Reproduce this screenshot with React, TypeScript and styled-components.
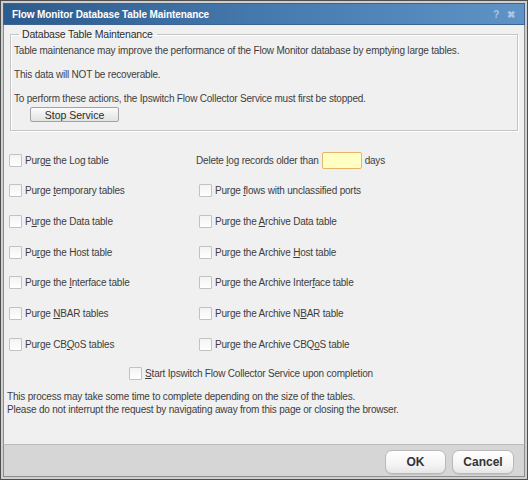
import React from 'react';
import styled, { createGlobalStyle } from 'styled-components';

const GlobalStyle = createGlobalStyle`
    html, body {
        margin: 0;
        padding: 0;
        background: #ffffff;
    }
    * {
        box-sizing: border-box;
    }
`;

const Window = styled.div`
    width: 528px;
    height: 480px;
    border: 1px solid #4f4f4f;
    background: #cfcfcf;
    padding: 2px;
    display: flex;
    flex-direction: column;
    font-family: "Liberation Sans", Arial, sans-serif;
    font-size: 10px;
    letter-spacing: -0.2px;
    color: #3e3e3e;
`;

const TitleBar = styled.div`
    height: 22px;
    flex-shrink: 0;
    display: flex;
    align-items: center;
    justify-content: space-between;
    padding: 0 9px 0 8px;
    background: linear-gradient(to right, #2c5b8d, #4b7fb3 60%, #5f93c6);
    border: 1px solid #3a6594;
`;

const Title = styled.span`
    color: #ffffff;
    font-weight: bold;
    font-size: 10px;
    letter-spacing: -0.1px;
`;

const TitleTools = styled.div`
    display: flex;
    gap: 8px;
    color: #a9c6e4;
    font-weight: bold;
    font-size: 10px;
`;

const Body = styled.div`
    flex: 1;
    background: #f0f0f0;
    border-left: 1px solid #8c8c8c;
    border-right: 1px solid #8c8c8c;
    padding: 3px 6px 0 2px;
    display: flex;
    flex-direction: column;
`;

const Group = styled.fieldset`
    margin: 0 0 0 4px;
    padding: 4px 4px 8px 3px;
    border: 1px solid #c4c4c4;
    box-shadow: inset 1px 1px 0 #ffffff, 1px 1px 0 #ffffff;
`;

const Legend = styled.legend`
    margin-left: 5px;
    padding: 0 4px 0 3px;
    color: #2e2e2e;
    font-size: 10.5px;
`;

const Note = styled.p`
    margin: 0;
    line-height: 13px;
`;

const Intro = styled.div`
    display: flex;
    flex-direction: column;
    gap: 11px;
`;

const StopButton = styled.button`
    margin: 2px 0 0 16px;
    width: 89px;
    height: 15px;
    padding: 0;
    font: inherit;
    font-size: 10.5px;
    color: #2a2a2a;
    border: 1px solid #a3a3a3;
    border-radius: 2px;
    background: linear-gradient(#fbfbfb, #e2e2e2);
    align-self: flex-start;
`;

const Options = styled.div`
    display: grid;
    grid-template-columns: 187px 1fr;
    grid-auto-rows: 30.67px;
    align-items: center;
    margin-top: 14px;
    padding-left: 3px;
`;

const Option = styled.label<{ $inset?: number }>`
    display: flex;
    align-items: center;
    gap: 3px;
    padding-left: ${(p) => p.$inset ?? 0}px;
`;

const Box = styled.span`
    width: 13px;
    height: 13px;
    flex-shrink: 0;
    border: 1px solid #c2c2c2;
    border-radius: 1px;
    background: linear-gradient(#f3f3f3, #ffffff);
`;

const DaysInput = styled.span`
    width: 40px;
    height: 17px;
    background: #ffffc4;
    border: 1px solid #e6b565;
    border-radius: 2px;
`;

const Completion = styled.div`
    display: flex;
    justify-content: center;
    margin: 0 0 0 -22px;
    height: 28px;
    align-items: center;
`;

const Footnote = styled.div`
    margin-top: 2px;
    padding-left: 1px;
    line-height: 13px;
`;

const Footer = styled.div`
    height: 33px;
    flex-shrink: 0;
    display: flex;
    justify-content: flex-end;
    align-items: center;
    gap: 6px;
    padding: 3px 10px 0 0;
    background: #d6d6d6;
    border: 1px solid #8c8c8c;
    border-top-color: #bcbcbc;
`;

const DialogButton = styled.button<{ $w: number }>`
    width: ${(p) => p.$w}px;
    height: 24px;
    padding: 0;
    font-family: "Liberation Sans", Arial, sans-serif;
    font-size: 12px;
    font-weight: bold;
    color: #333333;
    border: 1px solid #b9b9b9;
    border-radius: 7px;
    background: linear-gradient(#ffffff, #f4f4f4 60%, #e6e6e6);
    box-shadow: 0 1px 0 #c4c4c4;
`;

// access key letter, underlined like a Windows mnemonic
const U = styled.span`
    text-decoration: underline;
`;

function Check({ children, inset }: { children: React.ReactNode; inset?: number }) {
    return (
        <Option $inset={inset}>
            <Box />
            <span>{children}</span>
        </Option>
    );
}

function App() {
    return (
        <>
            <GlobalStyle />
            <Window>
                <TitleBar>
                    <Title>Flow Monitor Database Table Maintenance</Title>
                    <TitleTools>
                        <span>?</span>
                        <span>✖</span>
                    </TitleTools>
                </TitleBar>
                <Body>
                    <Group>
                        <Legend>Database Table Maintenance</Legend>
                        <Intro>
                            <Note>Table maintenance may improve the performance of the Flow Monitor database by emptying large tables.</Note>
                            <Note>This data will NOT be recoverable.</Note>
                            <Note>To perform these actions, the Ipswitch Flow Collector Service must first be stopped.</Note>
                        </Intro>
                        <StopButton>Stop Service</StopButton>
                    </Group>

                    <Options>
                        <Check>Purg<U>e</U> the Log table</Check>
                        <Option>
                            <span>Delete <U>l</U>og records older than</span>
                            <DaysInput />
                            <span>days</span>
                        </Option>
                        <Check>Purge <U>t</U>emporary tables</Check>
                        <Check inset={3}>Purge <U>f</U>lows with unclassified ports</Check>
                        <Check>P<U>u</U>rge the Data table</Check>
                        <Check inset={3}>Purge the <U>A</U>rchive Data table</Check>
                        <Check>Pu<U>r</U>ge the Host table</Check>
                        <Check inset={3}>Purge the Archive <U>H</U>ost table</Check>
                        <Check>Purge the <U>I</U>nterface table</Check>
                        <Check inset={3}>Purge the Archive Inter<U>f</U>ace table</Check>
                        <Check>Purge <U>N</U>BAR tables</Check>
                        <Check inset={3}>Purge the Archive N<U>B</U>AR table</Check>
                        <Check>Purge CB<U>Q</U>oS tables</Check>
                        <Check inset={3}>Purge the Archive CBQ<U>o</U>S table</Check>
                    </Options>

                    <Completion>
                        <Check><U>S</U>tart Ipswitch Flow Collector Service upon completion</Check>
                    </Completion>

                    <Footnote>
                        This process may take some time to complete depending on the size of the tables.
                        <br />
                        Please do not interrupt the request by navigating away from this page or closing the browser.
                    </Footnote>
                </Body>
                <Footer>
                    <DialogButton $w={61}>OK</DialogButton>
                    <DialogButton $w={62}>Cancel</DialogButton>
                </Footer>
            </Window>
        </>
    );
}

export default App;
